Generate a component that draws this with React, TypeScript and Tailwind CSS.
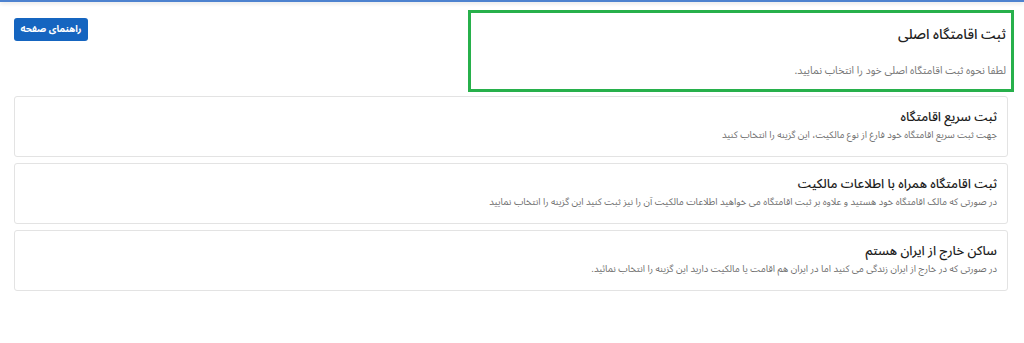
import React from 'react';

type Option = {
  title: string;
  description: string;
};

const options: Option[] = [
  {
    title: 'ثبت سریع اقامتگاه',
    description: 'جهت ثبت سریع اقامتگاه خود فارغ از نوع مالکیت، این گزینه را انتخاب کنید',
  },
  {
    title: 'ثبت اقامتگاه همراه با اطلاعات مالکیت',
    description:
      'در صورتی که مالک اقامتگاه خود هستید و علاوه بر ثبت اقامتگاه می خواهید اطلاعات مالکیت آن را نیز ثبت کنید این گزینه را انتخاب نمایید',
  },
  {
    title: 'ساکن خارج از ایران هستم',
    description:
      'در صورتی که در خارج از ایران زندگی می کنید اما در ایران هم اقامت یا مالکیت دارید این گزینه را انتخاب نمائید.',
  },
];

function OptionCard({ title, description }: Option) {
  return (
    <div className="h-[61px] rounded-[3px] border border-[#e3e3e3] bg-white px-[10px] pt-[11px]">
      <h4 className="text-[12.8px] leading-[18px] font-medium text-[#1d1d1d]">{title}</h4>
      <p className="mt-[2px] text-[9.5px] leading-[14px] text-[#6f6f6f]">{description}</p>
    </div>
  );
}

export default function App() {
  return (
    <div
      dir="rtl"
      className="min-h-[343px] w-full bg-white"
      style={{ fontFamily: '"Noto Sans Arabic", "DejaVu Sans", sans-serif' }}
    >
      <div className="h-[2px] bg-[#4d82cf] shadow-[0_1px_4px_rgba(0,0,0,0.18)]" />

      <div className="pl-[14px] pr-[16px]">
        <div className="flex items-start justify-between">
          <div className="-ml-[6px] mt-[8px] h-[82px] w-[546px] -mr-[6px] border-[3px] border-[#27b04b] pl-[6px] pr-[5px] pt-[11px]">
            <h3 className="text-[14px] leading-[22px] font-medium text-[#222]">ثبت اقامتگاه اصلی</h3>
            <p className="mt-[16px] text-[10.5px] leading-[18px] text-[#767676]">
              لطفا نحوه ثبت اقامتگاه اصلی خود را انتخاب نمایید.
            </p>
          </div>

          <button className="mt-[16px] h-[23px] w-[74px] rounded-[3px] bg-[#1565c0] text-[9.5px] font-bold text-white">
            راهنمای صفحه
          </button>
        </div>

        <div className="mt-[4px] flex flex-col gap-[6px]">
          {options.map((option) => (
            <OptionCard key={option.title} {...option} />
          ))}
        </div>
      </div>
    </div>
  );
}
